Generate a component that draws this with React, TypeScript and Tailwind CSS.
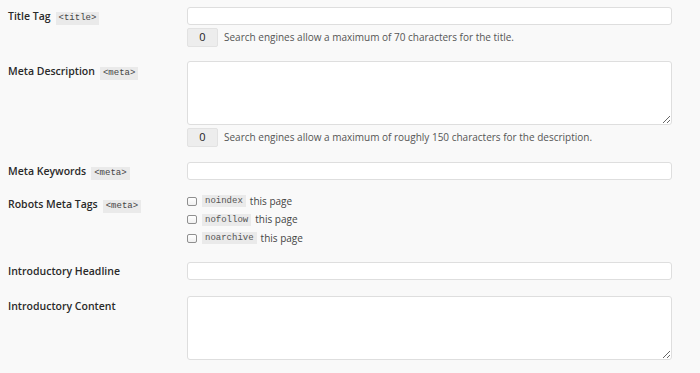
import React from 'react';

const font = { fontFamily: '"Open Sans", "DejaVu Sans", sans-serif' };

function Tag({ children }: { children: React.ReactNode }) {
  return (
    <code className="ml-[5px] inline-block h-[13px] bg-[#eaeaea] px-[3px] font-[family-name:'Liberation_Mono',monospace] text-[9px] font-normal leading-[13px] text-[#444]">
      {children}
    </code>
  );
}

function Label({ children, className = '' }: { children: React.ReactNode; className?: string }) {
  return (
    <div className={`w-[187px] shrink-0 pl-2 text-[10.5px] font-semibold leading-[18px] text-[#2a2a2a] ${className}`}>{children}</div>
  );
}

function Counter({ text }: { text: string }) {
  return (
    <div className="mt-[3px] flex items-center gap-[6px]">
      <div className="flex h-[19px] w-[31px] items-center justify-center rounded-[2px] border border-[#e2e2e2] bg-[#ededed] text-[11px] font-medium text-[#222]">
        0
      </div>
      <span className="text-[10px] text-[#555]">{text}</span>
    </div>
  );
}

function Check({ code }: { code: string }) {
  return (
    <div className="flex h-[18.5px] items-center">
      <span className="h-[9px] w-[10px] rounded-[2px] border border-[#8f8f8f] bg-gradient-to-b from-white to-[#f0f0f0]" />
      <code className="ml-[5px] inline-block h-[12px] bg-[#eaeaea] px-[3px] font-[family-name:'Liberation_Mono',monospace] text-[9px] leading-[12px] text-[#555]">
        {code}
      </code>
      <span className="ml-[4px] text-[10px] text-[#444]">this page</span>
    </div>
  );
}

const inputCls = 'h-[18px] w-[485px] rounded-[3px] border border-[#dedede] bg-white';

export default function App() {
  return (
    <div className="h-[373px] w-[700px] overflow-hidden bg-[#f9f9f9]" style={font}>
      <div className="flex pt-[7px]">
        <Label>
          Title Tag<Tag>&lt;title&gt;</Tag>
        </Label>
        <div className="flex flex-col">
          <input className={inputCls} />
          <Counter text="Search engines allow a maximum of 70 characters for the title." />
        </div>
      </div>

      <div className="mt-[14px] flex">
        <Label className="pt-[1px]">
          Meta Description<Tag>&lt;meta&gt;</Tag>
        </Label>
        <div className="flex flex-col">
          <textarea className="block h-[64px] w-[485px] rounded-[3px] border border-[#dedede] bg-white" />
          <Counter text="Search engines allow a maximum of roughly 150 characters for the description." />
        </div>
      </div>

      <div className="mt-[15px] flex">
        <Label>
          Meta Keywords<Tag>&lt;meta&gt;</Tag>
        </Label>
        <input className={inputCls} />
      </div>

      <div className="mt-[12px] flex">
        <Label className="pt-[3px]">
          Robots Meta Tags<Tag>&lt;meta&gt;</Tag>
        </Label>
        <div className="flex flex-col">
          <Check code="noindex" />
          <Check code="nofollow" />
          <Check code="noarchive" />
        </div>
      </div>

      <div className="mt-[14px] flex">
        <Label>Introductory Headline</Label>
        <input className={inputCls} />
      </div>

      <div className="mt-[16px] flex">
        <Label className="pt-[1px]">Introductory Content</Label>
        <textarea className="block h-[64px] w-[485px] rounded-[3px] border border-[#dedede] bg-white" />
      </div>
    </div>
  );
}
